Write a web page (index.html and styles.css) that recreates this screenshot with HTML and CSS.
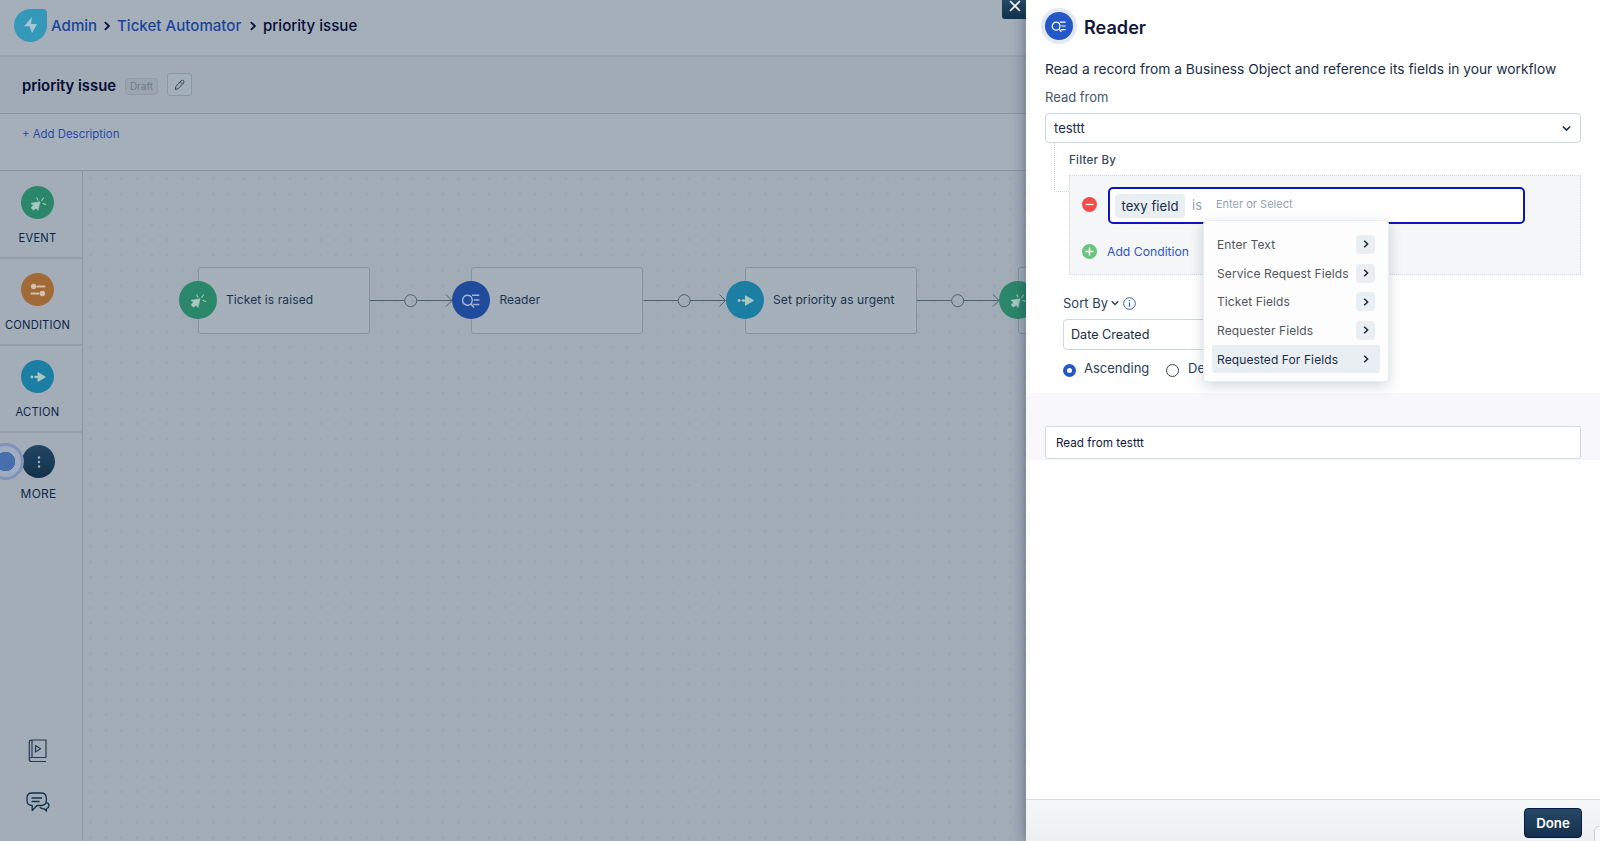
FILE: index.html
```html
<!DOCTYPE html>
<html lang="en">
<head>
<meta charset="utf-8">
<title>Ticket Automator</title>
<link rel="stylesheet" href="styles.css">
</head>
<body>
<svg width="0" height="0" class="defs">
  <symbol id="i-event" viewBox="0 0 20 20"><path d="M12.100 8.700 3 10.300 5.400 12 3.200 15 5.500 17.200 8.300 14.900 9.900 17.600z" fill="currentColor" stroke="currentColor" stroke-linejoin="round" stroke-width=".6"/><path d="M8.900 4.800 9.900 7.100M15.500 5 13.700 7.300M15.100 10.500 17.700 11.500" stroke="currentColor" stroke-width="1.100" stroke-linecap="round"/></symbol>
  <symbol id="i-cond" viewBox="0 0 20 20"><circle cx="5.6" cy="6.5" r="2.7" fill="currentColor"/><circle cx="14.4" cy="13.5" r="2.7" fill="currentColor"/><path d="M9.3 6.5H16.5M3.5 13.5H10.5" stroke="currentColor" stroke-width="2" stroke-linecap="round"/></symbol>
  <symbol id="i-action" viewBox="0 0 20 20"><circle cx="3.9" cy="10" r="1.4" fill="currentColor"/><circle cx="7.6" cy="10" r="1.2" fill="currentColor"/><path d="M7.8 10H12" stroke="currentColor" stroke-width="2"/><path d="M10 5.6 17.3 10 10 14.4z" fill="currentColor" stroke="currentColor" stroke-width="1" stroke-linejoin="round"/></symbol>
  <symbol id="i-reader" viewBox="0 0 20 20"><path d="M10.600 7.300A5 5 0 1 0 10.600 13.100M9.900 14 13 17.400M10.600 7.300Q12.200 10.200 10.600 13.100M11 5.200H18.300M13 10H18.300M12.200 14.500H18.300" fill="none" stroke="currentColor" stroke-width="1.500"/></symbol>
  <symbol id="i-right" viewBox="0 0 10 10"><path d="M3.200 1.800 6.600 5 3.200 8.200" fill="none" stroke="currentColor" stroke-width="1.500"/></symbol>
  <symbol id="i-down" viewBox="0 0 10 10"><path d="M1.700 3.200 5 6.500 8.300 3.200" fill="none" stroke="currentColor" stroke-width="1.400"/></symbol>
</svg>

<div class="app">
  <header class="crumbs">
    <svg class="logo" width="33" height="33" viewBox="0 0 33 33"><path d="M16.500 0H29Q33 0 33 4V16.500A16.500 16.500 0 1 1 16.500 0z" fill="#3498b9"/><path d="M18 8 10 17.300H15.500L18 24 23 15H17z" fill="#a5c6d4" class="bolt"/></svg>
    <a class="crumb crumb-admin">Admin</a>
    <svg class="sep" width="12" height="12"><use href="#i-right"/></svg>
    <a class="crumb crumb-auto">Ticket Automator</a>
    <svg class="sep" width="12" height="12"><use href="#i-right"/></svg>
    <span class="crumb current">priority issue</span>
  </header>
  <div class="titlebar">
    <h1 class="wf-name">priority issue</h1>
    <span class="badge">Draft</span>
    <button class="edit"><svg width="11" height="12" viewBox="0 0 11 12"><path d="M1.300 10.500 1.800 7.600 7.200 1.700Q8.500.8 9.600 1.900T9.500 4L4.100 9.700zM6.200 2.900 8.400 5" fill="none" stroke="#2f4256" stroke-width="1"/></svg></button>
  </div>
  <div class="desc"><a class="add-desc">+ Add Description</a></div>
  <div class="main">
    <nav class="palette">
      <div class="tool"><span class="disc green"><svg width="20" height="20"><use href="#i-event"/></svg></span><span class="tool-name event">EVENT</span></div>
      <div class="tool"><span class="disc orange"><svg width="20" height="20"><use href="#i-cond"/></svg></span><span class="tool-name condition">CONDITION</span></div>
      <div class="tool"><span class="disc cyan"><svg width="20" height="20"><use href="#i-action"/></svg></span><span class="tool-name action">ACTION</span></div>
      <div class="tool more"><span class="beacon"></span><span class="disc navy"><svg width="4" height="14" viewBox="0 0 4 14" fill="#9eb0bf"><circle cx="2" cy="2.500" r="1.200"/><circle cx="2" cy="7" r="1.200"/><circle cx="2" cy="11.500" r="1.200"/></svg></span><span class="tool-name more-name">MORE</span></div>
      <div class="helpers">
        <svg width="20" height="24" viewBox="0 0 20 24" fill="none" stroke="#263c52" stroke-width="1.200"><path d="M18 18.500V1H3.500Q1.300 1 1.300 3V20.500Q1.300 22.500 3.500 22.500H18M1.300 20.500Q1.300 18.500 3.500 18.500H18M4 1V18.500M7.500 6.500V13L12.500 9.800z" stroke-linejoin="round"/></svg>
        <svg width="24" height="21" viewBox="0 0 24 21" fill="none" stroke="#14304b" stroke-width="1.300" stroke-linejoin="round"><path d="M6 1H15Q20.300 1 20.300 6V8.500Q20.300 13.500 15 13.500H11L6.200 18.500V13.500Q1 13.500 1 8.500V6Q1 1 6 1zM5.500 6H16M5.500 9.500H13.500M13.800 15.200Q15 16.800 18 16.800L20.500 19V16.500Q23 15.500 23 13.500 23 11.200 20.500 10.600"/></svg>
      </div>
    </nav>
    <section class="canvas">
      <svg class="links" width="943" height="20" viewBox="0 0 943 20" fill="none" stroke="#4f6072" stroke-width="1">
        <g id="link"><path d="M287 10.500H321.500M333.500 10.500H369M363 4.500 369 10.500 363 16.500"/><circle cx="327.700" cy="10.700" r="6"/></g>
        <use href="#link" x="273.500"/><use href="#link" x="547"/>
      </svg>
      <div class="node n1"><span class="disc big green"><svg width="20" height="20"><use href="#i-event"/></svg></span><span class="node-name t1">Ticket is raised</span></div>
      <div class="node n2"><span class="disc big blue"><svg width="20" height="20"><use href="#i-reader"/></svg></span><span class="node-name t2">Reader</span></div>
      <div class="node n3"><span class="disc big cyan"><svg width="21" height="21"><use href="#i-action"/></svg></span><span class="node-name t3">Set priority as urgent</span></div>
      <div class="node n4"><span class="disc big green"><svg width="20" height="20"><use href="#i-event"/></svg></span></div>
    </section>
  </div>
</div>

<aside class="panel">
  <button class="close"><svg width="12" height="12" viewBox="0 0 12 12"><path d="M1 1 11 11M11 1 1 11" stroke="#fff" stroke-width="1.700"/></svg></button>
  <div class="p-head"><span class="p-icon"><svg width="16" height="16"><use href="#i-reader"/></svg></span><h2 class="p-title">Reader</h2></div>
  <p class="p-desc">Read a record from a Business Object and reference its fields in your workflow</p>
  <label class="p-label">Read from</label>
  <div class="select"><span class="select-text">testtt</span><svg width="11" height="11"><use href="#i-down"/></svg></div>
  <div class="filter">
    <div class="elbow"></div>
    <div class="filter-label">Filter By</div>
    <div class="filter-box">
      <div class="cond-row">
        <svg class="minus" width="15" height="15" viewBox="0 0 15 15"><circle cx="7.500" cy="7.500" r="7.500" fill="#f94a4a"/><path d="M3.500 7.500H11.500" stroke="#fff" stroke-width="1.400"/></svg>
        <div class="cond-input"><span class="chip">texy field</span><span class="is">is</span><span class="ph">Enter or Select</span></div>
      </div>
      <div class="add-row">
        <svg width="15" height="15" viewBox="0 0 15 15"><circle cx="7.500" cy="7.500" r="7.500" fill="#6bc47d"/><path d="M3.500 7.500H11.500M7.500 3.500V11.500" stroke="#fff" stroke-width="1.400"/></svg>
        <a class="add-cond">Add Condition</a>
      </div>
    </div>
    <div class="menu">
      <div class="item"><span class="mi1">Enter Text</span><i class="go"><svg width="10" height="10"><use href="#i-right"/></svg></i></div>
      <div class="item"><span class="mi2">Service Request Fields</span><i class="go"><svg width="10" height="10"><use href="#i-right"/></svg></i></div>
      <div class="item"><span class="mi3">Ticket Fields</span><i class="go"><svg width="10" height="10"><use href="#i-right"/></svg></i></div>
      <div class="item"><span class="mi4">Requester Fields</span><i class="go"><svg width="10" height="10"><use href="#i-right"/></svg></i></div>
      <div class="item on"><span class="mi5">Requested For Fields</span><i class="go"><svg width="10" height="10"><use href="#i-right"/></svg></i></div>
    </div>
  </div>
  <div class="sort">
    <div class="sort-head"><span class="sort-label">Sort By</span><svg width="10" height="10"><use href="#i-down"/></svg><svg width="13" height="13" viewBox="0 0 13 13"><circle cx="6.500" cy="6.500" r="5.800" fill="none" stroke="#2f5bd0" stroke-width="1"/><path d="M6.500 5.500V9.800M6.500 3V4.300" stroke="#2f5bd0" stroke-width="1.200"/></svg></div>
    <div class="sort-select">Date Created</div>
    <div class="radios"><span class="radio sel"></span><span class="asc">Ascending</span><span class="radio"></span><span class="dsc">De</span></div>
  </div>
  <div class="summary"><div class="summary-input">Read from testtt</div></div>
  <footer class="p-foot"><button class="done">Done</button><span class="corner"></span></footer>
</aside>
</body>
</html>
```

FILE: styles.css
```css
* { box-sizing: border-box; }
body { margin: 0; width: 1600px; height: 841px; overflow: hidden; position: relative; font-family: Inter, "Noto Sans", sans-serif; color: #0a1c3e; background: #a3adb8; white-space: nowrap; }
.defs { position: absolute; }
svg { display: block; flex: none; }
h1, h2, p { margin: 0; }
button { border: 0; padding: 0; font-family: inherit; }

.app { width: 1600px; height: 841px; display: flex; flex-direction: column; }
.crumbs { height: 57px; border-bottom: 2px solid #97a3ae; background: #a5afba; display: flex; align-items: center; padding: 0 0 4px 14px; font-size: 15.100px; font-weight: 500; line-height: 20px; }
.logo { margin-bottom: 1px; }
.crumb-admin { width: 46px; margin-left: 4px; }
.crumb-auto { width: 126px; }
.crumb { color: #1a459b; }
.sep { margin: 0 4px; color: #06103a; }
.crumb.current { color: #050d36; }
.titlebar { height: 57px; border-bottom: 1px solid #8996a2; background: #a1abb5; display: flex; align-items: center; padding-left: 22px; }
.wf-name { width: 95px; margin-top: 2px; font-size: 14.800px; font-weight: 600; color: #050d36; line-height: 20px; }
.badge { width: 33px; height: 17px; margin: 2px 0 0 8px; border: 1px solid #8f9ba7; border-radius: 4px; background: #9aa5af; font-size: 10px; line-height: 15px; text-align: center; color: #6f7c8b; }
.edit { width: 25px; height: 23px; margin: -1px 0 0 9px; border: 1px solid #8798ab; border-radius: 3px; background: #a5afba; display: flex; align-items: center; justify-content: center; }
.desc { height: 57px; border-bottom: 1px solid #8895a2; background: #a5afba; padding: 12px 0 0 22px; font-size: 11.400px; line-height: 16px; color: #2a4ba3; }
.main { flex: 1; display: flex; min-height: 0; }
.palette { width: 83px; padding-top: 1px; border-right: 1px solid #8896a4; background: #a3adb8; display: flex; flex-direction: column; }
.tool { height: 87px; border-bottom: 2px solid #929eaa; padding: 14px 7px 0 0; display: flex; flex-direction: column; align-items: center; position: relative; }
.disc { width: 33px; height: 33px; border-radius: 50%; display: flex; align-items: center; justify-content: center; color: #a9c7c4; flex: none; }
.green { background: #2a8769; }
.orange { background: #a26a37; color: #d1c0b2; }
.cyan { background: #1b7fa3; }
.blue { background: #204b9d; color: #a3b4d3; }
.navy { background: linear-gradient(#234764, #12304b); }
.tool-name { margin-top: 11px; font-size: 11.200px; line-height: 16px; color: #0d2747; letter-spacing: .2px; }
.tool.more { border: 0; padding: 12px 5px 0 0; }
.more-name { margin-top: 8px; font-size: 12px; }
.beacon { position: absolute; left: -13px; top: 10px; width: 37px; height: 37px; border-radius: 50%; border: 3px solid #7f92b9; background: radial-gradient(circle, #486fad 9.500px, #a1acc0 10px); }
.helpers { margin-top: auto; padding: 0 0 28px 26px; display: flex; flex-direction: column; gap: 29px; }
.helpers svg:first-child { margin-left: 2px; }
.canvas { flex: 1; position: relative; overflow: hidden; background-color: #a2acb7; background-image: radial-gradient(circle, #9ba5b2 1.200px, transparent 1.800px); background-size: 15.330px 15.330px; background-position: 0 0; }
.links { position: absolute; left: 0; top: 119px; }
.node { position: absolute; top: 96px; width: 172px; height: 67px; border: 1px solid #84949f; border-radius: 3px; background: #a5b0ba; display: flex; align-items: center; padding-bottom: 1px; }
.n1 { left: 115px; } .n2 { left: 388.400px; } .n3 { left: 662px; } .n4 { left: 935.400px; }
.disc.big { width: 38px; height: 38px; margin-left: -20px; }
.node-name { margin-left: 9px; font-size: 12px; line-height: 18px; color: #1b3350; letter-spacing: .1px; }

.panel { position: absolute; left: 1026px; top: 0; width: 574px; height: 841px; background: #fff; box-shadow: -2px 0 12px rgba(25, 45, 70, .4); display: flex; flex-direction: column; }
.close { position: absolute; left: -24px; top: 0; width: 24px; height: 19px; padding-left: 2px; background: linear-gradient(#234764, #12304b); border-radius: 0 0 0 3px; display: flex; justify-content: center; }
.p-head { display: flex; align-items: center; height: 36px; margin: 8px 0 0 15px; }
.p-icon { width: 36px; height: 36px; border: 4px solid #e4e7f6; border-radius: 50%; background: #2458c7; color: #fff; display: flex; align-items: center; justify-content: center; }
.p-title { margin: 1px 0 0 7px; font-size: 18.100px; font-weight: 600; color: #12173a; line-height: 24px; }
.p-desc { margin: 15px 0 0 19px; font-size: 13.790px; line-height: 20px; color: #1a2d45; }
.p-label { margin: 9px 0 0 19px; font-size: 13px; line-height: 19px; color: #45556a; }
.select { margin: 6px 19px 0; height: 30px; border: 1px solid #cfd7df; border-radius: 4px; display: flex; align-items: center; justify-content: space-between; padding: 0 8px; font-size: 13px; color: #1a2d45; }
.filter { position: relative; margin: 0 19px 0 43px; height: 131px; }
.elbow { position: absolute; left: -15px; top: 0; width: 15px; height: 49px; border-left: 1px dotted #cfd7df; border-bottom: 1px dotted #cfd7df; }
.filter-label { padding-top: 9px; height: 32px; font-size: 11.500px; line-height: 16px; font-weight: 500; color: #36465b; letter-spacing: .25px; }
.filter-box { height: 100px; border: 1px dotted #cfd7df; background: #f5f6f8; padding: 11px 0 0 12px; }
.cond-row { display: flex; align-items: center; height: 37px; }
.minus { margin-bottom: 2px; }
.cond-input { width: 417px; height: 37px; margin-left: 11px; border: 2px solid #0b17b8; border-radius: 5px; background: #fff; display: flex; align-items: center; padding-left: 5px; }
.chip { width: 70px; height: 24px; border-radius: 4px; background: #e9eef2; font-size: 13.200px; line-height: 24px; text-align: center; color: #1a2d45; }
.is { margin-left: 7px; width: 24px; font-size: 13px; color: #9aa4ae; padding-bottom: 1px; }
.ph { font-size: 11px; color: #92a2b1; padding-bottom: 3px; }
.add-row { display: flex; align-items: center; margin-top: 18px; height: 18px; }
.add-cond { margin: 1px 0 0 10px; font-size: 12.200px; color: #2f56c6; }
.menu { position: absolute; z-index: 2; left: 134px; top: 77px; width: 186px; height: 162px; padding: 9px 8px 8px; border: 1px solid #e6edf3; border-radius: 4px; background: #fdfdfd; box-shadow: 0 4px 14px rgba(30, 50, 70, .2); }
.item { height: 28.700px; display: flex; align-items: center; justify-content: space-between; padding: 0 5px; border-radius: 3px; font-size: 12px; color: #50555c; letter-spacing: .1px; }
.item.on { background: #e9eef2; color: #1a2d45; }
.go { width: 19px; height: 19px; border-radius: 4px; background: #e9eef2; color: #1c2733; display: flex; align-items: center; justify-content: center; }
.sort { margin-left: 37px; height: 119px; padding-top: 20px; }
.sort-head { height: 18px; display: flex; align-items: center; gap: 2.500px; font-size: 13px; color: #2c3e54; }
.sort-select { width: 300px; height: 31px; margin-top: 7px; border: 1px solid #cfd7df; border-radius: 4px; padding-left: 7px; font-size: 12.600px; line-height: 29px; color: #1a2d45; }
.radios { margin-top: 9px; height: 18px; display: flex; align-items: center; font-size: 13px; line-height: 18px; color: #2c3e54; }
.radio { width: 13px; height: 13px; margin-top: 4px; border: 1px solid #33475b; border-radius: 50%; background: #fff; }
.radio.sel { border: 4px solid #2458c7; }
.asc { margin-left: 8px; width: 82px; }
.dsc { margin-left: 9px; }
.summary { height: 67px; background: #f8f8fa; padding: 33px 19px 0; }
.summary-input { height: 33px; border: 1px solid #cfd9e1; border-radius: 2px; background: #fff; padding-left: 10px; font-size: 11.700px; line-height: 32px; color: #12173a; }
.p-foot { margin-top: auto; height: 42px; border-top: 1px solid #d9dbdf; background: linear-gradient(#f6f7f9, #eeeff1); position: relative; padding: 8px 18px 0 0; display: flex; justify-content: flex-end; }
.done { width: 58px; height: 30px; border: 1px solid #0a1747; border-radius: 4px; background: linear-gradient(#264966, #12304b); color: #fff; font-size: 13.300px; font-weight: 600; }
.corner { position: absolute; right: -4px; bottom: -4px; width: 10px; height: 19px; border: 1px solid #d0d2d5; border-radius: 5px 0 0 0; background: #f7f8f9; }
```
